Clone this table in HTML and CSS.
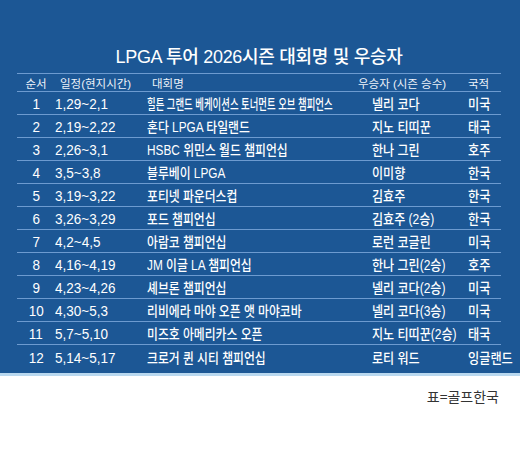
FILE: index.html
```html
<!DOCTYPE html>
<html lang="ko">
<head>
<meta charset="utf-8">
<title>LPGA 투어 2026시즌 대회명 및 우승자</title>
<link rel="stylesheet" href="styles.css">
</head>
<body>
<div class="panel">
  <h1 class="title">LPGA 투어 2026시즌 대회명 및 우승자</h1>
  <div class="table">
    <div class="row head">
      <span class="h-no">순서</span>
      <span class="h-date">일정(현지시간)</span>
      <span class="h-name">대회명</span>
      <span class="h-win">우승자 (시즌 승수)</span>
      <span class="h-nat">국적</span>
    </div>
    <div class="row"><span class="no"><i>1</i></span><span class="date"><i>1,29~2,1</i></span><span class="name"><i class="squeeze">힐튼 그랜드 베케이션스 토너먼트 오브 챔피언스</i></span><span class="win"><i>넬리 코다</i></span><span class="nat"><i>미국</i></span></div>
    <div class="row"><span class="no"><i>2</i></span><span class="date"><i>2,19~2,22</i></span><span class="name"><i>혼다 LPGA 타일랜드</i></span><span class="win"><i>지노 티띠꾼</i></span><span class="nat"><i>태국</i></span></div>
    <div class="row"><span class="no"><i>3</i></span><span class="date"><i>2,26~3,1</i></span><span class="name"><i>HSBC 위민스 월드 챔피언십</i></span><span class="win"><i>한나 그린</i></span><span class="nat"><i>호주</i></span></div>
    <div class="row"><span class="no"><i>4</i></span><span class="date"><i>3,5~3,8</i></span><span class="name"><i>블루베이 LPGA</i></span><span class="win"><i>이미향</i></span><span class="nat"><i>한국</i></span></div>
    <div class="row"><span class="no"><i>5</i></span><span class="date"><i>3,19~3,22</i></span><span class="name"><i>포티넷 파운더스컵</i></span><span class="win"><i>김효주</i></span><span class="nat"><i>한국</i></span></div>
    <div class="row"><span class="no"><i>6</i></span><span class="date"><i>3,26~3,29</i></span><span class="name"><i>포드 챔피언십</i></span><span class="win"><i>김효주 (2승)</i></span><span class="nat"><i>한국</i></span></div>
    <div class="row"><span class="no"><i>7</i></span><span class="date"><i>4,2~4,5</i></span><span class="name"><i>아람코 챔피언십</i></span><span class="win"><i>로런 코글린</i></span><span class="nat"><i>미국</i></span></div>
    <div class="row"><span class="no"><i>8</i></span><span class="date"><i>4,16~4,19</i></span><span class="name"><i>JM 이글 LA 챔피언십</i></span><span class="win"><i>한나 그린(2승)</i></span><span class="nat"><i>호주</i></span></div>
    <div class="row"><span class="no"><i>9</i></span><span class="date"><i>4,23~4,26</i></span><span class="name"><i>셰브론 챔피언십</i></span><span class="win"><i>넬리 코다(2승)</i></span><span class="nat"><i>미국</i></span></div>
    <div class="row"><span class="no"><i>10</i></span><span class="date"><i>4,30~5,3</i></span><span class="name"><i>리비에라 마야 오픈 앳 마야코바</i></span><span class="win"><i>넬리 코다(3승)</i></span><span class="nat"><i>미국</i></span></div>
    <div class="row"><span class="no"><i>11</i></span><span class="date"><i>5,7~5,10</i></span><span class="name"><i>미즈호 아메리카스 오픈</i></span><span class="win"><i>지노 티띠꾼(2승)</i></span><span class="nat"><i>태국</i></span></div>
    <div class="row last"><span class="no"><i>12</i></span><span class="date"><i>5,14~5,17</i></span><span class="name"><i>크로거 퀸 시티 챔피언십</i></span><span class="win"><i>로티 워드</i></span><span class="nat"><i>잉글랜드</i></span></div>
  </div>
</div>
<div class="strip"></div>
<p class="source">표=골프한국</p>
</body>
</html>
```

FILE: styles.css
```css
html, body {
  margin: 0;
  padding: 0;
  background: #ffffff;
}

body {
  width: 520px;
  font-family: "Liberation Sans", "Noto Sans CJK KR", sans-serif;
}

.panel {
  background: #1c5795;
  padding: 44px 19px 4px 17px;
  color: #ffffff;
}

.title {
  margin: 0 0 5px 0;
  height: 24px;
  line-height: 26px;
  font-size: 18px;
  font-weight: 500;
  letter-spacing: -0.3px;
  text-align: center;
}

.table {
  display: flex;
  flex-direction: column;
}

.row {
  display: grid;
  grid-template-columns: 38px 92px 225px 96px 1fr;
  align-items: center;
  height: 23px;
  box-sizing: border-box;
  border-bottom: 1px solid #6d9bd0;
  white-space: nowrap;
  font-size: 14px;
  font-weight: 500;
}

.row.last {
  border-bottom: none;
  height: 24px;
}

.row.head {
  height: 19px;
  border-top: 1px solid #6d9bd0;
  font-size: 11.5px;
  font-weight: 400;
  color: #eef3f9;
}

.h-no { text-align: center; }
.h-date { padding-left: 5px; }
.h-name { padding-left: 5px; }
.h-win { margin-left: -14px; }
.h-nat { padding-left: 0; }

.row i {
  font-style: normal;
  display: inline-block;
  transform-origin: left center;
}

.no {
  text-align: center;
}

.no i,
.date i {
  font-size: 15px;
  font-weight: 400;
  transform: scaleX(0.9);
}

.no i {
  transform-origin: center center;
}

.name i {
  transform: scaleX(0.845);
}

.name i.squeeze {
  transform: scaleX(0.67);
}

.win i {
  transform: scaleX(0.86);
}

.nat i {
  transform: scaleX(0.87);
}

.strip {
  height: 3px;
  background: #b9d8ef;
}

.source {
  margin: 10px 21px 0 0;
  text-align: right;
  font-family: "Noto Sans CJK KR", sans-serif;
  font-size: 14px;
  line-height: 20px;
  color: #333333;
}
```
